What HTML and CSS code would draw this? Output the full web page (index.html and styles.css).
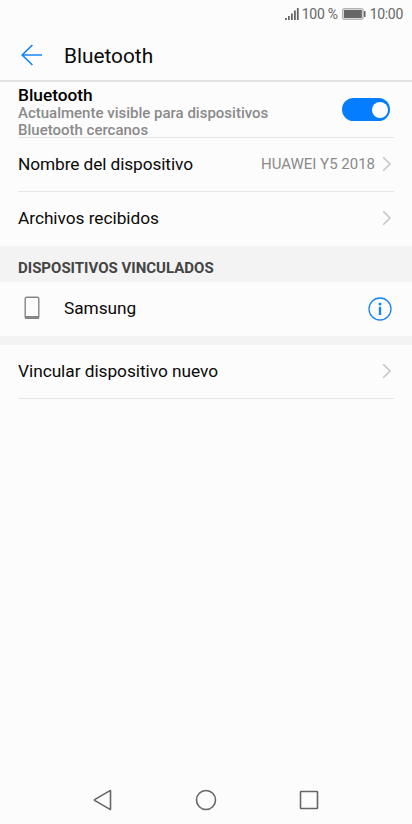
FILE: index.html
```html
<!DOCTYPE html>
<html lang="es">
<head>
<meta charset="utf-8">
<meta name="viewport" content="width=device-width, initial-scale=1">
<title>Bluetooth</title>
<link rel="stylesheet" href="styles.css">
</head>
<body>
<div class="screen">
  <div class="status">
    <svg class="signal" width="14" height="14" viewBox="0 0 14 14"><path d="M.9 11v2M3.9 9v4M6.9 6.5V13M9.9 3.5V13M12.8 1v12" stroke="#666" stroke-width="1.8"/></svg>
    <span class="percent">100 %</span>
    <svg class="battery" width="24" height="12" viewBox="0 0 24 12"><rect x=".6" y=".6" width="20.6" height="10.8" rx="1.5" fill="#ddd" stroke="#aaa" stroke-width="1"/><rect x="2" y="2" width="17.8" height="8" fill="#666"/><path d="M22.7 3v6" stroke="#666" stroke-width="1.6"/></svg>
    <span class="clock">10:00</span>
  </div>
  <header class="header">
    <svg class="back" width="22" height="22" viewBox="0 0 22 22"><path d="M21 11H1.200M11.400 1L1.200 11l10.200 10" fill="none" stroke="#1784fc" stroke-width="1.700"/></svg>
    <h1 class="title">Bluetooth</h1>
  </header>
  <main class="content">
    <div class="row toggle-row">
      <div class="texts">
        <div class="name">Bluetooth</div>
        <div class="note">Actualmente visible para dispositivos<br>Bluetooth cercanos</div>
      </div>
      <div class="switch"><div class="knob"></div></div>
    </div>
    <div class="row">
      <span class="label device-name">Nombre del dispositivo</span>
      <span class="value">HUAWEI Y5 2018</span>
      <svg class="chevron" width="10" height="16" viewBox="0 0 10 16"><path d="M1.2 1.2L8 8l-6.8 6.8" fill="none" stroke="#c6c6c6" stroke-width="1.6"/></svg>
    </div>
    <div class="row received">
      <span class="label">Archivos recibidos</span>
      <svg class="chevron" width="10" height="16" viewBox="0 0 10 16"><path d="M1.2 1.2L8 8l-6.8 6.8" fill="none" stroke="#c6c6c6" stroke-width="1.6"/></svg>
    </div>
    <h2 class="section">DISPOSITIVOS VINCULADOS</h2>
    <div class="row paired">
      <svg class="phone" width="16" height="24" viewBox="0 0 16 24"><rect x="1.2" y="1.2" width="13.6" height="21.2" rx="1.5" fill="none" stroke="#858585" stroke-width="1.4"/><path d="M1 20h14v1.500q0 1.600-1.600 1.600H2.600Q1 23.100 1 21.500z" fill="#858585"/></svg>
      <span class="label paired-name">Samsung</span>
      <svg class="info" width="24" height="24" viewBox="0 0 24 24"><circle cx="12" cy="12" r="11" fill="none" stroke="#1784fc" stroke-width="1.3"/><circle cx="12" cy="6.900" r="1.500" fill="#1784fc"/><path d="M12 9.800v8.200" stroke="#1784fc" stroke-width="2.300"/></svg>
    </div>
    <div class="gap"></div>
    <div class="row">
      <span class="label pair-new">Vincular dispositivo nuevo</span>
      <svg class="chevron" width="10" height="16" viewBox="0 0 10 16"><path d="M1.2 1.2L8 8l-6.8 6.8" fill="none" stroke="#c6c6c6" stroke-width="1.6"/></svg>
    </div>
  </main>
  <nav class="nav">
    <svg width="22" height="22" viewBox="0 0 22 22"><path d="M18.500 1.800v18.400q0 .5-.5.200L2.600 11.400q-.5-.4 0-.8L18 1.600q.5-.3.500.2z" fill="none" stroke="#666" stroke-width="1.600"/></svg>
    <svg width="22" height="22" viewBox="0 0 22 22"><circle cx="11" cy="11" r="9.500" fill="none" stroke="#666" stroke-width="1.600"/></svg>
    <svg width="22" height="22" viewBox="0 0 22 22"><rect x="2.500" y="2.500" width="17" height="17" rx=".6" fill="none" stroke="#666" stroke-width="1.600"/></svg>
  </nav>
</div>
</body>
</html>
```
FILE: styles.css
```css
* { box-sizing: border-box; }

body {
  margin: 0;
  background: #fcfcfc;
  color: #0a0a0a;
  font-family: Roboto, "Liberation Sans", sans-serif;
}

svg { display: block; flex: none; }

.screen {
  display: flex;
  flex-direction: column;
  width: 412px;
  height: 824px;
  overflow: hidden;
}

.status {
  display: flex;
  align-items: center;
  justify-content: flex-end;
  height: 28px;
  padding-right: 9px;
  color: #666;
  font-size: 14px;
  letter-spacing: -0.3px;
  white-space: nowrap;
}
.signal { margin-right: 3px; }
.battery { margin: 0 4px; }

.header {
  display: flex;
  align-items: center;
  height: 54px;
  padding: 2px 20px 0 21px;
  border-bottom: 2px solid #e2e2e2;
}
.title {
  margin: 1px 0 0 21px;
  font-size: 20.8px;
  font-weight: 400;
}

.content { flex: 1; }

.row {
  display: flex;
  align-items: center;
  height: 54px;
  margin: 0 18px;
  border-bottom: 1px solid #e6e6e6;
  white-space: nowrap;
}
.toggle-row { height: 56px; }
.texts { flex: 1; padding-top: 5px; }
.name {
  font-size: 17.3px;
  font-weight: 500;
  line-height: 20px;
  color: #000;
}
.note {
  color: #8a8a8a;
  font-size: 15px;
  font-weight: 500;
  line-height: 17px;
}
.switch {
  display: flex;
  justify-content: flex-end;
  align-items: center;
  width: 48px;
  height: 23px;
  margin-right: 4px;
  padding: 0 2px;
  border-radius: 12px;
  background: #047dff;
}
.knob {
  width: 16px;
  height: 16px;
  border-radius: 50%;
  background: #fff;
}

.label {
  flex: 1;
  padding-bottom: 2px;
  font-size: 17.3px;
  letter-spacing: -0.04px;
}
.device-name { letter-spacing: -0.1px; }
.value {
  margin-right: 7px;
  padding-bottom: 1px;
  color: #8a8a8a;
  font-size: 15px;
}
.chevron { margin: 0 2px 2px 0; }

.received, .paired { border-bottom: 0; }

.section {
  height: 36px;
  margin: 0;
  padding: 4px 18px 0;
  background: #f3f3f3;
  color: #444;
  font-size: 15px;
  font-weight: 700;
  line-height: 36px;
}
.phone { margin: 0 0 2px 6px; }
.paired-name { margin-left: 24px; }
.info { margin: 0 2px 1px 0; }
.gap { height: 9px; background: #f3f3f3; }

.nav {
  display: flex;
  justify-content: space-between;
  align-items: center;
  height: 48px;
  padding: 0 92px;
}
```
